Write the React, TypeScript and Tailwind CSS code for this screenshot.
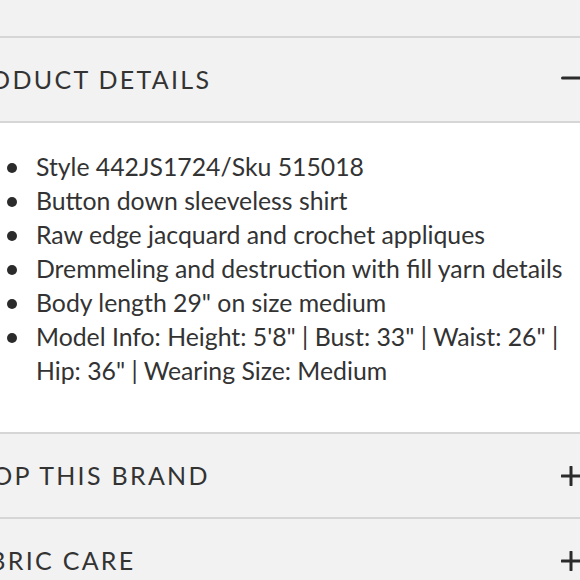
import React from 'react';

const details = [
  'Style 442JS1724/Sku 515018',
  'Button down sleeveless shirt',
  'Raw edge jacquard and crochet appliques',
  'Dremmeling and destruction with fill yarn details',
  'Body length 29" on size medium',
  'Model Info: Height: 5\'8" | Bust: 33" | Waist: 26" | Hip: 36" | Wearing Size: Medium',
];

function PlusIcon() {
  return (
    <svg width="20" height="20" viewBox="0 0 20 20" className="shrink-0">
      <path d="M10 1v18M1 10h18" stroke="#2b2b2b" strokeWidth="3" strokeLinecap="round" />
    </svg>
  );
}

function MinusIcon() {
  return (
    <svg width="20" height="20" viewBox="0 0 20 20" className="shrink-0">
      <path d="M1.5 8h18" stroke="#2b2b2b" strokeWidth="3" strokeLinecap="round" />
    </svg>
  );
}

function SectionHeader({ title, open }: { title: string; open?: boolean }) {
  return (
    <div className="flex h-[85px] items-center justify-between bg-[#f2f2f2] pr-[14px] border-b-2 border-[#d6d6d6]">
      <span className="text-[25px] tracking-[2.3px] text-[#333]">{title}</span>
      {open ? <MinusIcon /> : <PlusIcon />}
    </div>
  );
}

export default function App() {
  return (
    <div className="h-[580px] w-[580px] overflow-hidden bg-white" style={{ fontFamily: 'Lato, "Open Sans", sans-serif' }}>
      <div className="-ml-[45px] w-[640px]">
        <div className="h-[38px] bg-[#f2f2f2] border-b-2 border-[#d6d6d6]" />
        <SectionHeader title="PRODUCT DETAILS" open />
        <div className="bg-white pt-[27px] pb-[44px] border-b-2 border-[#d6d6d6]">
          <ul className="pl-[52px] pr-[30px]">
            {details.map((d) => (
              <li key={d} className="flex gap-[19px] text-[24.8px] leading-[34px] text-[#333]">
                <span className="mt-[13px] h-[10px] w-[10px] shrink-0 rounded-full bg-[#2b2b2b]" />
                <span className="w-[562px]">{d}</span>
              </li>
            ))}
          </ul>
        </div>
        <SectionHeader title="SHOP THIS BRAND" />
        <SectionHeader title="FABRIC CARE" />
      </div>
    </div>
  );
}
